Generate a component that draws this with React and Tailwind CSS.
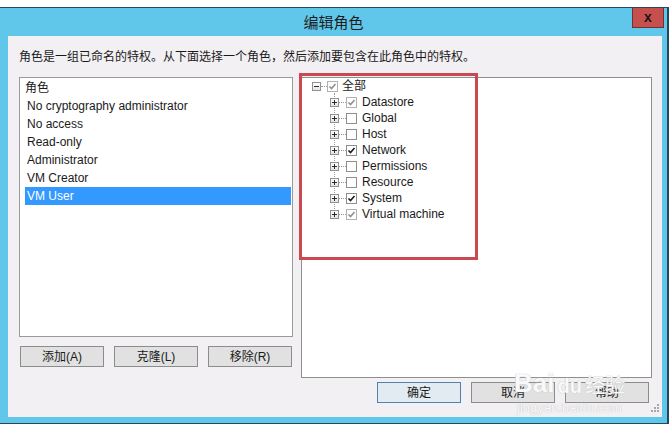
import React from "react";

const roles = [
  "No cryptography administrator",
  "No access",
  "Read-only",
  "Administrator",
  "VM Creator",
  "VM User",
];

const privileges = [
  { name: "Datastore", state: "grey" },
  { name: "Global", state: "none" },
  { name: "Host", state: "none" },
  { name: "Network", state: "black" },
  { name: "Permissions", state: "none" },
  { name: "Resource", state: "none" },
  { name: "System", state: "black" },
  { name: "Virtual machine", state: "grey" },
];

function Check({ state }) {
  return (
    <span
      className={`flex h-[11px] w-[11px] shrink-0 items-center justify-center border bg-white ${
        state === "grey" ? "border-[#b2b2b2]" : "border-[#8e8f8f]"
      }`}
    >
      {state !== "none" && (
        <svg width="9" height="9" viewBox="0 0 9 9">
          <path
            d="M1.5 4.5 L3.5 6.5 L7.5 2"
            fill="none"
            stroke={state === "grey" ? "#8f8f8f" : "#1a1a1a"}
            strokeWidth="1.6"
          />
        </svg>
      )}
    </span>
  );
}

function Expander({ open }) {
  return (
    <span className="relative z-10 flex h-[9px] w-[9px] shrink-0 items-center justify-center border border-[#919191] bg-gradient-to-b from-white to-[#e4e4e4]">
      <svg width="7" height="7" viewBox="0 0 7 7">
        <path d="M1 3.5 H6" stroke="#2b2b2b" />
        {!open && <path d="M3.5 1 V6" stroke="#2b2b2b" />}
      </svg>
    </span>
  );
}

function Button({ children, primary }) {
  return (
    <button
      className={`h-[21px] w-[84px] border text-[12px] leading-none text-[#1a1a1a] ${
        primary ? "border-[#4f82ad] bg-[#e3ebf2]" : "border-[#8c8c8c] bg-[#e1e1e1]"
      }`}
    >
      {children}
    </button>
  );
}

export default function App() {
  return (
    <div className="h-[435px] w-[672px] overflow-hidden bg-white font-['Liberation_Sans','Noto_Sans_CJK_SC',sans-serif] text-[#1a1a1a]">
      <div className="mt-[7px] flex h-[417px] w-[669px] flex-col border-t border-r-2 border-b border-[#27485a] bg-[#61c7ea]">
        {/* title bar */}
        <div className="flex h-[28px] shrink-0 items-center">
          <div className="flex-1" />
          <div className="text-[15px] leading-none text-[#1c1c1c]">编辑角色</div>
          <div className="flex flex-1 justify-end self-start">
            <div className="mr-[3px] flex h-[20px] w-[32px] items-center justify-center border border-t-0 border-[#6b3434] bg-[#c7504f] pb-[2px] text-[14px] font-bold leading-none text-[#1c1414]">
              x
            </div>
          </div>
        </div>

        {/* body */}
        <div className="relative ml-[8px] flex h-[381px] w-[654px] flex-col bg-[#f3f0f4] pt-[13px] pl-[11px] pr-[10px]">
          <div className="h-[16px] text-[12px] leading-[16px]">
            角色是一组已命名的特权。从下面选择一个角色，然后添加要包含在此角色中的特权。
          </div>

          <div className="mt-[12px] flex gap-[8px]">
            <div className="flex w-[274px] flex-col">
              <div className="h-[260px] border border-[#9a9a9a] bg-white pt-px text-[12px] leading-[18px]">
                <div className="h-[18px] pl-[5px]">角色</div>
                {roles.map((r) => (
                  <div
                    key={r}
                    className={`ml-[5px] mr-px h-[18px] pl-[2px] ${
                      r === "VM User" ? "bg-[#3399ff] text-white" : ""
                    }`}
                  >
                    {r}
                  </div>
                ))}
              </div>
              <div className="mt-[9px] ml-px flex gap-[10px]">
                <Button>添加(A)</Button>
                <Button>克隆(L)</Button>
                <Button>移除(R)</Button>
              </div>
            </div>

            <div className="relative h-[301px] w-[351px] border border-[#8f8f8f] bg-white">
              <div className="relative text-[12px] leading-[16px]">
                <span className="absolute left-[32px] top-[15px] h-[122px] border-l border-dotted border-[#9a9a9a]" />
                <div className="flex h-[16px] items-center pl-[10px]">
                  <Expander open />
                  <span className="w-[6px] border-t border-dotted border-[#9a9a9a]" />
                  <Check state="grey" />
                  <span className="ml-[4px]">全部</span>
                </div>
                {privileges.map((p) => (
                  <div key={p.name} className="flex h-[16px] items-center pl-[28px]">
                    <Expander />
                    <span className="w-[7px] border-t border-dotted border-[#9a9a9a]" />
                    <Check state={p.state} />
                    <span className="ml-[5px]">{p.name}</span>
                  </div>
                ))}
              </div>
              {/* red annotation frame */}
              <div className="pointer-events-none absolute left-[-3px] top-[-5px] h-[187px] w-[179px] border-[3px] border-[#c9494f]" />
            </div>
          </div>

          <div className="mt-[4px] mr-[3px] flex justify-end gap-[10px]">
            <Button primary>确定</Button>
            <Button>取消</Button>
            <Button>帮助</Button>
          </div>

          {/* watermark */}
          <div className="pointer-events-none absolute left-[506px] top-[334px] flex flex-col items-center text-white/90 [text-shadow:0_0_1px_#c4c4c4,0_0_1px_#c4c4c4]">
            <div className="flex items-end gap-[3px]">
              <span className="text-[26px] font-bold leading-none">Bai</span>
              <span className="text-[20px] font-bold leading-none">du</span>
              <span className="text-[20px] leading-none">经验</span>
            </div>
            <span className="mt-[5px] text-[13px] leading-none">jingyan.baidu.com</span>
          </div>

          {/* resize grip */}
          <svg className="absolute bottom-[4px] right-[2px]" width="9" height="9" viewBox="0 0 9 9">
            <g fill="#a8a8a8">
              <rect x="6" y="0" width="2" height="2" />
              <rect x="6" y="3" width="2" height="2" />
              <rect x="3" y="3" width="2" height="2" />
              <rect x="6" y="6" width="2" height="2" />
              <rect x="3" y="6" width="2" height="2" />
              <rect x="0" y="6" width="2" height="2" />
            </g>
          </svg>
        </div>
      </div>
    </div>
  );
}
